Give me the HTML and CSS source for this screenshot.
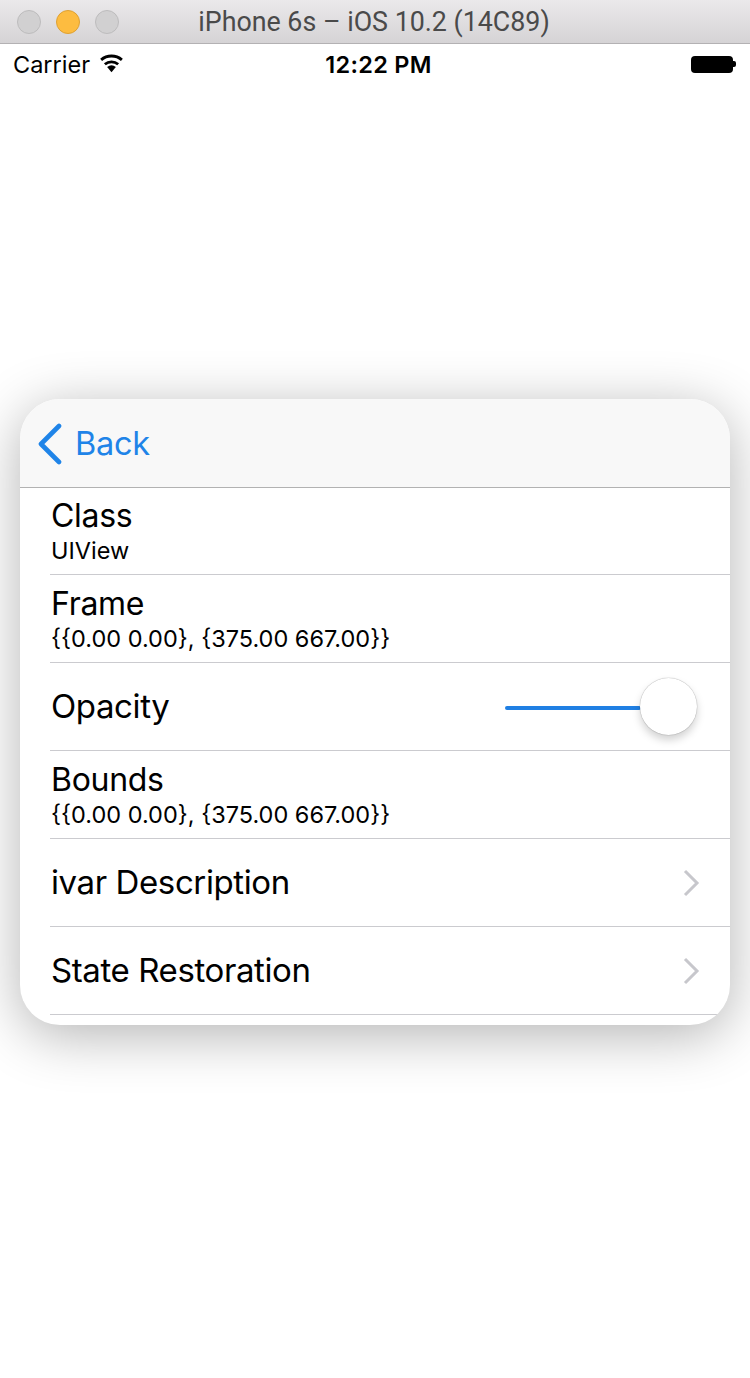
FILE: index.html
```html
<!DOCTYPE html>
<html>
<head>
<meta charset="utf-8">
<link rel="stylesheet" href="styles.css">
</head>
<body>
<div class="titlebar">
  <div class="lights">
    <span class="light gray"></span>
    <span class="light yellow"></span>
    <span class="light gray"></span>
  </div>
  <div class="wintitle">iPhone 6s – iOS 10.2 (14C89)</div>
</div>
<div class="statusbar">
  <div class="sb-left">
    <span class="carrier">Carrier</span>
    <svg class="wifi" width="27" height="20" viewBox="0 0 26 19">
      <path d="M13 18.5 L17.2 13.4 A6.5 6.5 0 0 0 8.8 13.4 Z" fill="#000"/>
      <path d="M6.6 10.7 A10 10 0 0 1 19.4 10.7" fill="none" stroke="#000" stroke-width="2.8"/>
      <path d="M3 6.4 A15.5 15.5 0 0 1 23 6.4" fill="none" stroke="#000" stroke-width="2.8"/>
    </svg>
  </div>
  <div class="time">12:22 PM</div>
  <div class="battery"><span class="batt-body"></span><span class="batt-nub"></span></div>
</div>
<main class="stage">
  <section class="card">
    <header class="navbar">
      <svg class="back-chev" width="28" height="42" viewBox="0 0 28 42">
        <path d="M23 3 L5 21 L23 39" fill="none" stroke="#1f84e8" stroke-width="4.6" stroke-linecap="round" stroke-linejoin="round"/>
      </svg>
      <span class="back-label">Back</span>
    </header>
    <div class="row two first">
      <div class="title">Class</div>
      <div class="sub">UIView</div>
    </div>
    <div class="row two">
      <div class="title">Frame</div>
      <div class="sub">{{0.00 0.00}, {375.00 667.00}}</div>
    </div>
    <div class="row single">
      <div class="label">Opacity</div>
      <div class="slider">
        <span class="track"></span>
        <span class="knob"></span>
      </div>
    </div>
    <div class="row two">
      <div class="title">Bounds</div>
      <div class="sub">{{0.00 0.00}, {375.00 667.00}}</div>
    </div>
    <div class="row single">
      <div class="label">ivar Description</div>
      <svg class="chev" width="18" height="28" viewBox="0 0 18 28">
        <path d="M3 2 L15 14 L3 26" fill="none" stroke="#c7c7cc" stroke-width="3"/>
      </svg>
    </div>
    <div class="row single">
      <div class="label">State Restoration</div>
      <svg class="chev" width="18" height="28" viewBox="0 0 18 28">
        <path d="M3 2 L15 14 L3 26" fill="none" stroke="#c7c7cc" stroke-width="3"/>
      </svg>
    </div>
  </section>
</main>
</body>
</html>
```

FILE: styles.css
```css
html, body {
  margin: 0;
  padding: 0;
  background: #fff;
}
body {
  width: 750px;
  height: 1378px;
  overflow: hidden;
  font-family: Inter, "Liberation Sans", sans-serif;
  color: #000;
}
.titlebar {
  position: relative;
  height: 43px;
  border-bottom: 1px solid #b3b1b3;
  background: linear-gradient(#ebe9eb, #d5d3d5);
  display: flex;
  align-items: center;
  justify-content: center;
}
.lights {
  position: absolute;
  left: 17px;
  top: 10px;
  display: flex;
  gap: 15px;
}
.light {
  width: 24px;
  height: 24px;
  border-radius: 50%;
  box-sizing: border-box;
}
.light.gray {
  background: #d1d0d1;
  border: 1px solid #bdbcbd;
}
.light.yellow {
  background: #fdbc40;
  border: 1px solid #dfa132;
}
.wintitle {
  font-family: Roboto, "Liberation Sans", sans-serif;
  font-size: 26.8px;
  color: #4a4a4a;
  margin-left: -2px;
}
.statusbar {
  height: 40px;
  display: flex;
  align-items: center;
  justify-content: space-between;
  padding: 0 14px 0 13px;
  font-family: Inter, "Liberation Sans", sans-serif;
}
.sb-left {
  display: flex;
  align-items: center;
  gap: 8px;
  width: 170px;
}
.carrier {
  font-size: 23.5px;
  letter-spacing: 0;
}
.wifi {
  margin-top: -2px;
}
.time {
  font-size: 23.5px;
  font-weight: 600;
  letter-spacing: 0.3px;
  margin-left: 8px;
}
.battery {
  width: 170px;
  display: flex;
  justify-content: flex-end;
  align-items: center;
}
.batt-body {
  width: 42px;
  height: 17px;
  background: #000;
  border-radius: 4px;
}
.batt-nub {
  width: 3px;
  height: 6px;
  background: #000;
  border-radius: 0 2px 2px 0;
}
.stage {
  padding: 315px 20px 0 20px;
}
.card {
  width: 710px;
  height: 626px;
  background: #fff;
  border-radius: 40px;
  overflow: hidden;
  box-shadow: 0 10px 55px rgba(0, 0, 0, 0.3);
}
.navbar {
  height: 88px;
  background: #f8f8f8;
  border-bottom: 1px solid #b2b2b2;
  display: flex;
  align-items: center;
  padding-left: 16px;
}
.back-chev {
  margin-top: 1px;
}
.back-label {
  font-size: 32.5px;
  color: #1f84e8;
  margin-left: 11px;
  letter-spacing: -0.3px;
}
.row {
  margin-left: 30px;
  padding-left: 1px;
  height: 87px;
  border-bottom: 1px solid #cbcbcf;
  display: flex;
  box-sizing: border-box;
}
.row.two {
  flex-direction: column;
  justify-content: center;
  height: 88px;
  padding-top: 5px;
}
.row.two.first {
  height: 87px;
}
.row.single {
  height: 88px;
  align-items: center;
  justify-content: space-between;
  padding-right: 30px;
}
.title {
  font-size: 32px;
  line-height: 32px;
  letter-spacing: -0.3px;
}
.sub {
  font-size: 23.5px;
  line-height: 32px;
  margin-top: 3px;
  letter-spacing: 0;
}
.label {
  font-size: 33px;
  letter-spacing: -0.4px;
  margin-top: -2px;
}
.slider {
  width: 192px;
  height: 58px;
  display: flex;
  align-items: center;
  margin-right: 3px;
}
.track {
  width: 136px;
  height: 4px;
  background: #1f7fe3;
  border-radius: 2px;
  margin-top: 3px;
}
.knob {
  width: 57px;
  height: 57px;
  border-radius: 50%;
  background: #fff;
  margin-left: -1px;
  box-shadow: 0 5px 8px rgba(0, 0, 0, 0.18), 0 0 1px rgba(0, 0, 0, 0.3), 0 0 0 0.5px rgba(0, 0, 0, 0.08);
}
.chev {
  margin-right: 0;
}
```
